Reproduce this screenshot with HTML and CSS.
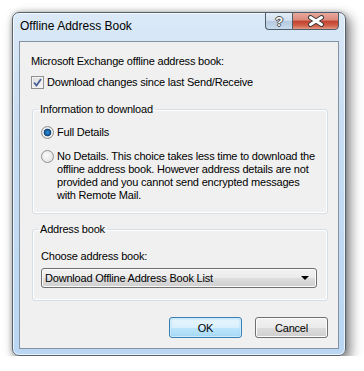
FILE: index.html
```html
<!DOCTYPE html>
<html lang="en">
<head>
    <meta charset="UTF-8">
    <meta name="viewport" content="width=device-width, initial-scale=1.0">
    <title>Offline Address Book</title>
    <link rel="stylesheet" href="styles.css">
</head>
<body>
    <div class="window">
        <div class="titlebar">
            <span class="title">Offline Address Book</span>
            <div class="caption-buttons">
                <div class="cap-btn help">?</div>
                <div class="cap-btn close">
                    <svg width="18" height="12" viewBox="0 0 18 12">
                        <path d="M3.5 2.5 L14.5 9.5 M14.5 2.5 L3.5 9.5" stroke="#3a3a3a" stroke-width="5" stroke-linecap="round"/>
                        <path d="M3.5 2.5 L14.5 9.5 M14.5 2.5 L3.5 9.5" stroke="#ffffff" stroke-width="3" stroke-linecap="round"/>
                    </svg>
                </div>
            </div>
        </div>
        <div class="client">
            <div class="label">Microsoft Exchange offline address book:</div>
            <div class="check-row">
                <span class="checkbox">
                    <svg width="9" height="9" viewBox="0 0 9 9">
                        <path d="M1 4.5 L3.5 7.5 L8 1" fill="none" stroke="#4a5f97" stroke-width="1.8"/>
                    </svg>
                </span>
                <span>Download changes since last Send/Receive</span>
            </div>
            <fieldset class="group info">
                <legend>Information to download</legend>
                <div class="radio-row first">
                    <span class="radio on"></span>
                    <span>Full Details</span>
                </div>
                <div class="radio-row multi">
                    <span class="radio"></span>
                    <span class="radio-text">No Details. This choice takes less time to download the<br>offline address book. However address details are not<br>provided and you cannot send encrypted messages<br>with Remote Mail.</span>
                </div>
            </fieldset>
            <fieldset class="group book">
                <legend>Address book</legend>
                <div class="label">Choose address book:</div>
                <div class="combo">
                    <span>Download Offline Address Book List</span>
                    <span class="arrow"></span>
                </div>
            </fieldset>
            <div class="buttons">
                <div class="btn default">OK</div>
                <div class="btn">Cancel</div>
            </div>
        </div>
    </div>
</body>
</html>
```

FILE: styles.css
```css
body {
    margin: 0;
    background-color: #ffffff;
    font-family: "Liberation Sans", Arial, sans-serif;
    font-size: 11px;
    letter-spacing: -0.2px;
    color: #000;
}
.window {
    width: 334px;
    height: 344px;
    margin: 12px 0 0 12px;
    box-sizing: border-box;
    border: 1px solid #56626e;
    border-radius: 7px;
    padding: 0 6px 6px 6px;
    display: flex;
    flex-direction: column;
    background: linear-gradient(#dbe9f7, #c9def3 30%, #bad6f2);
    box-shadow: 4px 5px 12px 1px rgba(0, 0, 0, 0.45), 0 0 5px rgba(0, 0, 0, 0.25), inset 0 0 0 1px rgba(255, 255, 255, 0.7);
}
.titlebar {
    height: 28px;
    display: flex;
    align-items: flex-start;
}
.title {
    padding: 6px 0 0 1px;
    line-height: 15px;
    font-size: 12px;
    letter-spacing: 0;
    color: #000;
}
.caption-buttons {
    margin-left: auto;
    margin-top: -1px;
    display: flex;
}
.cap-btn {
    height: 18px;
    box-sizing: border-box;
    border: 1px solid #4f5d6b;
    display: flex;
    align-items: center;
    justify-content: center;
}
.help {
    width: 27px;
    border-right: none;
    border-radius: 0 0 0 4px;
    background: linear-gradient(#e4eef8, #cfdeee 50%, #b4c9df 50%, #c8dbee);
    color: #fff;
    font-weight: bold;
    font-size: 13px;
    text-shadow: 1px 0 0 #4a4a4a, -1px 0 0 #4a4a4a, 0 1px 0 #4a4a4a, 0 -1px 0 #4a4a4a;
}
.close {
    width: 47px;
    border-radius: 0 0 4px 0;
    background: linear-gradient(#e9a99c, #d98a7a 45%, #c4402d 50%, #d0624c 80%, #e39a86);
}
.client {
    flex: 1;
    border: 1px solid #8393a3;
    background-color: #f0f0f0;
    padding: 12px 0 0 11px;
}
.label {
    line-height: 15px;
    white-space: nowrap;
}
.check-row {
    margin-top: 6px;
    display: flex;
    align-items: center;
    line-height: 15px;
}
.checkbox {
    width: 13px;
    height: 13px;
    box-sizing: border-box;
    border: 1px solid #8f8f8f;
    background: linear-gradient(135deg, #dcdcdc, #f8f8f8);
    display: flex;
    align-items: center;
    justify-content: center;
    margin-right: 3px;
    box-shadow: inset 0 0 0 1px #f4f4f4;
}
.group {
    margin: 12px 0 0 1px;
    width: 296px;
    min-width: 0;
    box-sizing: border-box;
    border: 1px solid #d5dfe5;
    border-radius: 3px;
    padding: 0 8px 11px 8px;
    box-shadow: inset 0 0 0 1px #fff;
}
.group.book {
    margin-top: 8px;
    padding-bottom: 12px;
}
.group legend {
    padding: 0 2px;
    margin-left: -3px;
    line-height: 15px;
}
.radio-row {
    display: flex;
    align-items: flex-start;
    line-height: 15px;
}
.radio-row.first {
    margin-top: 8px;
}
.radio-row.multi {
    margin-top: 10px;
    line-height: 13px;
}
.radio {
    width: 13px;
    height: 13px;
    box-sizing: border-box;
    flex: none;
    border: 1px solid #8f8f8f;
    border-radius: 50%;
    background: radial-gradient(circle at 40% 40%, #fbfbfb, #dcdcdc);
    margin: 1px 3px 0 0;
}
.radio-row.multi .radio {
    margin-top: 0;
}
.radio.on {
    background: radial-gradient(circle at 50% 50%, #2b8ed4 0, #1a5ea6 2.5px, #0b3d6e 3.5px, #f4f4f4 4.2px, #dddddd 6px);
}
.radio-text {
    white-space: nowrap;
}
.book .label {
    margin-top: 12px;
}
.combo {
    margin-top: 4px;
    width: 276px;
    height: 20px;
    box-sizing: border-box;
    border: 1px solid #707070;
    border-radius: 3px;
    background: linear-gradient(#f2f2f2, #ebebeb 50%, #dddddd 50%, #cfcfcf);
    box-shadow: inset 0 0 0 1px #fcfcfc;
    display: flex;
    align-items: center;
    padding: 0 7px 0 3px;
}
.arrow {
    margin-left: auto;
    width: 0;
    height: 0;
    border-left: 4px solid transparent;
    border-right: 4px solid transparent;
    border-top: 4px solid #000;
}
.buttons {
    margin: 16px 0 0 1px;
    width: 296px;
    display: flex;
    justify-content: flex-end;
    gap: 13px;
}
.btn {
    width: 73px;
    height: 21px;
    box-sizing: border-box;
    border: 1px solid #707070;
    border-radius: 3px;
    background: linear-gradient(#f2f2f2, #ebebeb 50%, #dddddd 50%, #cfcfcf);
    box-shadow: inset 0 0 0 1px #fcfcfc;
    display: flex;
    align-items: center;
    justify-content: center;
}
.btn.default {
    border-color: #3c7fb1;
    background: linear-gradient(#eaf6fd, #d9f0fc 50%, #bee6fd 50%, #a7d9f5);
    box-shadow: inset 0 0 0 1px #cbeafc, inset 0 0 2px 1px #9fd6f5;
}
```
